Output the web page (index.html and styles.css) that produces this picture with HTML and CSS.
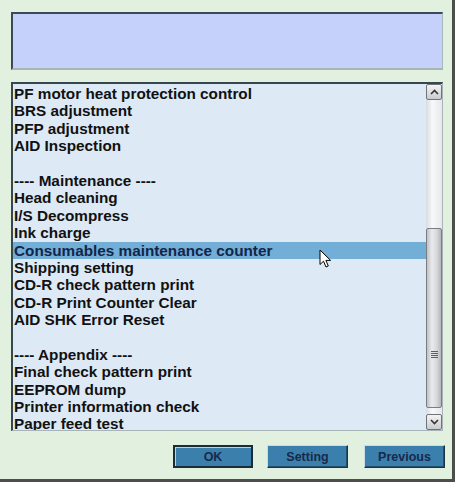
FILE: index.html
```html
<!DOCTYPE html>
<html>
<head>
<meta charset="utf-8">
<link rel="stylesheet" href="styles.css">
</head>
<body>
<div class="window">
  <div class="message"></div>
  <div class="listbox">
    <ul class="items">
      <li>PF motor heat protection control</li>
      <li>BRS adjustment</li>
      <li>PFP adjustment</li>
      <li>AID Inspection</li>
      <li>&nbsp;</li>
      <li>---- Maintenance ----</li>
      <li>Head cleaning</li>
      <li>I/S Decompress</li>
      <li>Ink charge</li>
      <li class="selected">Consumables maintenance counter</li>
      <li>Shipping setting</li>
      <li>CD-R check pattern print</li>
      <li>CD-R Print Counter Clear</li>
      <li>AID SHK Error Reset</li>
      <li>&nbsp;</li>
      <li>---- Appendix ----</li>
      <li>Final check pattern print</li>
      <li>EEPROM dump</li>
      <li>Printer information check</li>
      <li>Paper feed test</li>
    </ul>
    <div class="scrollbar">
      <div class="arrow up"><svg width="9" height="6" viewBox="0 0 9 6"><path d="M1 5 L4.5 1.5 L8 5" fill="none" stroke="#333" stroke-width="1.6"/></svg></div>
      <div class="track">
        <div class="thumb"><span class="grip"></span></div>
      </div>
      <div class="arrow down"><svg width="9" height="6" viewBox="0 0 9 6"><path d="M1 1 L4.5 4.5 L8 1" fill="none" stroke="#333" stroke-width="1.6"/></svg></div>
    </div>
    <svg class="cursor" width="13" height="20" viewBox="0 0 13 20"><path d="M1 1 L1 15.5 L4.5 12.2 L7 18 L9.3 17 L6.9 11.4 L11.6 11.4 Z" fill="#fff" stroke="#000" stroke-width="1" stroke-linejoin="round"/></svg>
  </div>
  <div class="buttons">
    <button class="btn focused">OK</button>
    <button class="btn">Setting</button>
    <button class="btn prev">Previous</button>
  </div>
</div>
</body>
</html>
```

FILE: styles.css
```css
html, body {
  margin: 0;
  padding: 0;
  background: #ffffff;
}
.window {
  width: 455px;
  height: 482px;
  box-sizing: border-box;
  background: #e2f1df;
  border-right: 3px solid #4a4f4c;
  border-bottom: 3px solid #4a4f4c;
  padding: 12px 9px 0 11px;
  display: flex;
  flex-direction: column;
  font-family: "Liberation Sans", Arial, sans-serif;
}
.message {
  height: 58px;
  box-sizing: border-box;
  background: #c6d1fb;
  border-top: 2px solid #3b4a56;
  border-left: 2px solid #3b4a56;
  border-right: 1px solid #a9b8b8;
  border-bottom: 2px solid #a6b6b4;
}
.listbox {
  position: relative;
  margin-top: 12px;
  height: 349px;
  box-sizing: border-box;
  background: #dde9f5;
  border-top: 2px solid #38464f;
  border-left: 2px solid #38464f;
  border-right: 1px solid #a8b5b8;
  border-bottom: 1px solid #a8b5b8;
  display: flex;
  overflow: hidden;
}
.items {
  list-style: none;
  margin: 0;
  padding: 1px 0 0 0;
  flex: 1;
  overflow: hidden;
}
.items li {
  height: 17.4px;
  line-height: 17.4px;
  padding-left: 1px;
  font-size: 15.3px;
  font-weight: bold;
  color: #111111;
  white-space: nowrap;
}
.items li.selected {
  background: #72aed6;
  color: #14254a;
}
.scrollbar {
  width: 16px;
  display: flex;
  flex-direction: column;
}
.arrow {
  height: 16px;
  box-sizing: border-box;
  border: 1px solid #6f7478;
  border-radius: 2px;
  background: linear-gradient(#f4f4f4, #c9cbcd);
  display: flex;
  align-items: center;
  justify-content: center;
}
.track {
  flex: 1;
  background: linear-gradient(to right, #d9dcdf, #f7f8f9 40%, #e6e8ea);
  padding-top: 128px;
  padding-bottom: 6px;
  box-sizing: border-box;
  display: flex;
  flex-direction: column;
}
.thumb {
  flex: 1;
  box-sizing: border-box;
  border: 1px solid #7a7e82;
  border-radius: 2px;
  background: linear-gradient(to right, #bfc2c5, #e9eaeb 35%, #d6d8da 70%, #b4b7ba);
  display: flex;
  align-items: center;
  justify-content: center;
  padding-top: 73px;
}
.grip {
  width: 7px;
  height: 7px;
  background: repeating-linear-gradient(#5b5f63 0 1px, transparent 1px 2px);
}
.cursor {
  position: absolute;
  left: 306px;
  top: 165px;
}
.buttons {
  display: flex;
  justify-content: flex-end;
  margin-top: 14px;
  margin-right: -2px;
}
.btn {
  width: 81px;
  height: 23px;
  box-sizing: border-box;
  margin-left: 14px;
  padding: 0;
  background: #3b80ad;
  border: 1px solid #1e3444;
  border-top-color: #c8dbe6;
  border-left-color: #c8dbe6;
  box-shadow: inset -1px -1px 0 #24506e;
  font-family: "Liberation Sans", Arial, sans-serif;
  font-size: 12.5px;
  font-weight: bold;
  color: #18294a;
}
.btn.focused {
  border: 2px solid #1b2b38;
  box-shadow: inset 1px 1px 0 #b9d3e2;
  width: 80px;
}
.btn.prev {
  margin-left: 16px;
}
```
